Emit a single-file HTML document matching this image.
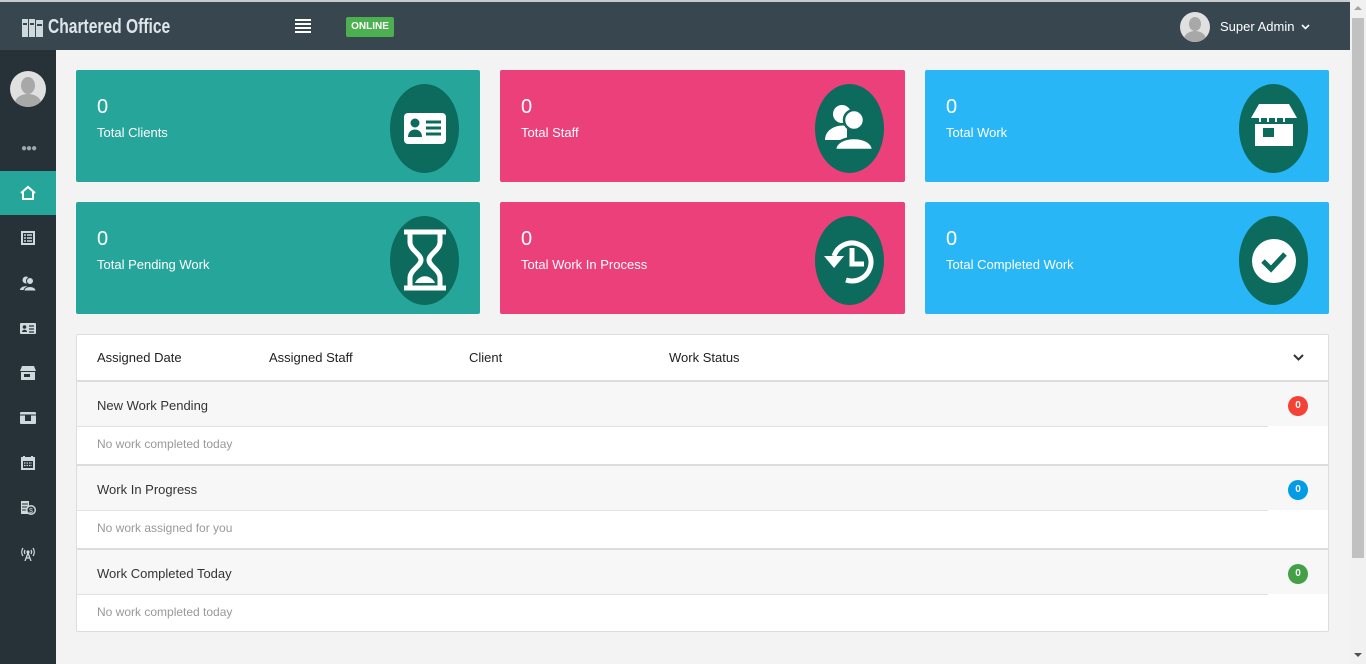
<!DOCTYPE html><html><head><style>
*{margin:0;padding:0;box-sizing:border-box}
body{width:1366px;height:664px;overflow:hidden;background:#f3f3f3;font-family:"Liberation Sans",sans-serif;position:relative}
.top{position:absolute;left:0;top:0;width:1350px;height:2px;background:#c8cbcc}
.hdr{position:absolute;left:0;top:2px;width:1350px;height:48px;background:#37464f;color:#fff}
.side{position:absolute;left:0;top:50px;width:56px;height:614px;background:#263238}
.sb{position:absolute;right:0;top:0;width:16px;height:664px;background:#f1f1f1}
.thumb{position:absolute;left:1352px;top:18px;width:12px;height:540px;background:#c1c1c1}
.card{position:absolute;height:112px;color:#fff;border-radius:2px}
.card .n{position:absolute;left:21px;top:26px;font-size:20px}
.card .l{position:absolute;left:21px;top:55px;font-size:13px}
.card .ic{position:absolute;right:21px;top:14px;width:69px;height:89px;border-radius:50%;background:#0c6b5c}
.card .ic svg{position:absolute;left:12px;top:22px}
.t{background:#26a69a}.p{background:#ec407a}.b{background:#29b6f6}
.tbl{position:absolute;left:76px;top:334px;width:1253px;height:298px;background:#fff;border:1px solid #ddd;border-radius:2px;font-size:13px;color:#333}
.row{position:absolute;left:0;width:1251px}
.sec{background:#f7f7f7;border-top:1px solid #ddd;height:46px}
.sec span{position:absolute;left:20px;top:16px}
.msg{height:37px;font-size:12px;color:#999}
.msg:before{content:"";position:absolute;left:0;top:0;width:1191px;border-top:1px solid #e3e3e3}
.msg span{position:absolute;left:20px;top:11px}
.bd{position:absolute;right:20px;top:14px;width:20px;height:20px;border-radius:50%;color:#fff;font-size:10px;font-weight:bold;text-align:center;line-height:20px}
.si{position:absolute;left:20px;width:16px;height:16px}
</style></head><body>
<div class="top"></div>
<div class="hdr">
<svg style="position:absolute;left:22px;top:17px" width="21" height="18" viewBox="0 0 21 18"><rect x="0" y="0" width="6" height="18" fill="#cfd8dc"/><rect x="7" y="0" width="6" height="18" fill="#cfd8dc"/><rect x="14" y="1" width="7" height="17" fill="#cfd8dc"/><rect x="1" y="4" width="4" height="2" fill="#37464f"/><rect x="8" y="4" width="4" height="2" fill="#37464f"/><rect x="15" y="5" width="5" height="2" fill="#37464f"/></svg>
<div style="position:absolute;left:48px;top:14px;font-size:20px;font-weight:bold;color:#dfe6ea;transform:scaleX(.78);transform-origin:left;white-space:nowrap">Chartered Office</div>
<div style="position:absolute;left:295px;top:17px;width:16px;height:14px;background:repeating-linear-gradient(#fff 0 2px,transparent 2px 4px)"></div>
<div style="position:absolute;left:346px;top:15px;width:48px;height:20px;background:#4caf50;border-radius:2px;font-size:10px;font-weight:bold;text-align:center;line-height:20px">ONLINE</div>
<div style="position:absolute;left:1180px;top:10px;width:30px;height:30px;border-radius:50%;background:#e0e0e0;overflow:hidden"><div style="position:absolute;left:9px;top:5px;width:12px;height:14px;border-radius:50%;background:#a8a8a8"></div><div style="position:absolute;left:4px;top:19px;width:22px;height:16px;border-radius:50% 50% 0 0;background:#a8a8a8"></div></div>
<div style="position:absolute;left:1220px;top:17px;font-size:13px">Super Admin</div>
<svg style="position:absolute;left:1301px;top:22px" width="9" height="6" viewBox="0 0 9 6"><path d="M1 1l3.5 3.5L8 1" stroke="#fff" stroke-width="1.6" fill="none"/></svg>
</div>
<div class="side">
<div style="position:absolute;left:10px;top:21px;width:36px;height:36px;border-radius:50%;background:#e0e0e0;overflow:hidden"><div style="position:absolute;left:11px;top:6px;width:14px;height:17px;border-radius:50%;background:#a8a8a8"></div><div style="position:absolute;left:5px;top:23px;width:26px;height:18px;border-radius:50% 50% 0 0;background:#a8a8a8"></div></div>
<div style="position:absolute;left:21px;top:93px;color:#9aa;font-size:10px;letter-spacing:-1px">●●●</div>
<div style="position:absolute;left:0;top:121px;width:56px;height:44px;background:#26a69a"><svg style="position:absolute;left:19px;top:14px" width="18" height="16" viewBox="0 0 18 16"><path d="M2 8 L9 2 L16 8 M4 7 V14 H14 V7" stroke="#fff" stroke-width="2" fill="none"/></svg></div>
<svg class="si" style="top:180px" viewBox="0 0 16 16"><rect x="1" y="1" width="14" height="14" fill="#cfd8dc"/><rect x="3" y="3" width="10" height="10" fill="#263238"/><path d="M4 5h2M7 5h5M4 8h2M7 8h5M4 11h2M7 11h5" stroke="#cfd8dc" stroke-width="1.5"/></svg>
<svg class="si" style="top:225px" viewBox="0 0 16 16"><circle cx="6" cy="5" r="3.5" fill="#cfd8dc"/><path d="M0 15c0-5 12-5 12 0z" fill="#cfd8dc"/><circle cx="10" cy="6" r="3.5" fill="#cfd8dc" stroke="#263238"/><path d="M4 16c0-6 12-6 12 0z" fill="#cfd8dc" stroke="#263238"/></svg>
<svg class="si" style="top:270px" viewBox="0 0 16 16"><rect x="0" y="3" width="16" height="11" rx="1" fill="#cfd8dc"/><circle cx="4.5" cy="7" r="1.8" fill="#263238"/><path d="M2 12c0-3 5-3 5 0z" fill="#263238"/><path d="M9 6h5M9 9h5M9 12h5" stroke="#263238" stroke-width="1.3"/></svg>
<svg class="si" style="top:315px" viewBox="0 0 16 16"><path d="M2 1h12l2 5H0z" fill="#cfd8dc"/><rect x="1" y="7" width="14" height="8" fill="#cfd8dc"/><rect x="4" y="9" width="6" height="3" fill="#263238"/></svg>
<svg class="si" style="top:360px" viewBox="0 0 16 16"><rect x="0" y="2" width="16" height="12" rx="1" fill="#cfd8dc"/><rect x="5" y="5" width="6" height="6" fill="#263238"/><path d="M0 5h16" stroke="#263238"/></svg>
<svg class="si" style="top:405px" viewBox="0 0 16 16"><rect x="1" y="2" width="14" height="13" fill="#cfd8dc"/><rect x="3" y="6" width="10" height="7" fill="#263238"/><path d="M4 1v3M12 1v3" stroke="#cfd8dc" stroke-width="2"/><path d="M4 8h8M4 10.5h8" stroke="#cfd8dc" stroke-width="1.2" stroke-dasharray="1.5 1"/></svg>
<svg class="si" style="top:450px" viewBox="0 0 16 16"><rect x="1" y="1" width="8" height="13" fill="#cfd8dc"/><path d="M2 4h6M2 7h6M2 10h6" stroke="#263238"/><circle cx="11" cy="10" r="5" fill="#cfd8dc"/><circle cx="11" cy="10" r="3.5" fill="#263238"/><text x="9" y="13" font-size="7" fill="#cfd8dc" font-family="Liberation Sans">$</text></svg>
<svg class="si" style="top:495px" viewBox="0 0 16 16"><path d="M3 3a7 7 0 0 0 0 8M13 3a7 7 0 0 1 0 8M5 5a4 4 0 0 0 0 4M11 5a4 4 0 0 1 0 4" stroke="#cfd8dc" stroke-width="1.3" fill="none"/><circle cx="8" cy="7" r="1.6" fill="#cfd8dc"/><path d="M8 8L5 16M8 8l3 8M6 13h4" stroke="#cfd8dc" stroke-width="1.3"/></svg>
</div>

<div class="card t" style="left:76px;top:70px;width:404px"><div class="n">0</div><div class="l">Total Clients</div><div class="ic"><svg width="46" height="44" viewBox="0 0 46 44" style="left:12px;top:23px"><rect x="2" y="6" width="42" height="31" rx="4" fill="#fff"/><circle cx="13" cy="16" r="4.5" fill="#0c6b5c"/><path d="M6 30c0-10 14-10 14 0z" fill="#0c6b5c"/><path d="M24 15h15M24 21h15M24 27h15" stroke="#0c6b5c" stroke-width="3"/></svg></div></div>
<div class="card p" style="left:500px;top:70px;width:405px"><div class="n">0</div><div class="l">Total Staff</div><div class="ic"><svg width="50" height="50" viewBox="0 0 50 50" style="left:8px;top:18px"><circle cx="19" cy="12" r="9" fill="#fff"/><path d="M2 38c0-12 14-16 22-14v14z" fill="#fff"/><circle cx="31" cy="18" r="10" stroke="#0c6b5c" stroke-width="2.5" fill="#fff"/><path d="M12 48c0-16 38-16 38 0z" fill="#fff" stroke="#0c6b5c" stroke-width="2.5"/></svg></div></div>
<div class="card b" style="left:925px;top:70px;width:404px"><div class="n">0</div><div class="l">Total Work</div><div class="ic"><svg width="46" height="46" viewBox="0 0 46 46" style="top:20px"><path d="M8 0h30l8 14H0z" fill="#fff"/><path d="M9 14v4M17 14v4M25 14v4M33 14v4" stroke="#fff" stroke-width="2"/><rect x="4" y="20" width="38" height="22" fill="#fff"/><rect x="12" y="24" width="11" height="9" fill="#0c6b5c"/></svg></div></div>
<div class="card t" style="left:76px;top:202px;width:404px"><div class="n">0</div><div class="l">Total Pending Work</div><div class="ic"><svg width="50" height="62" viewBox="0 0 50 62" style="left:10px;top:13px"><path d="M4 3h42M4 59h42" stroke="#fff" stroke-width="5"/><path d="M10 5v8c0 8 11 12 11 18s-11 10-11 18v8M40 5v8c0 8-11 12-11 18s11 10 11 18v8" stroke="#fff" stroke-width="5" fill="none"/><path d="M15 54c4-9 16-9 20 0z" fill="#fff"/></svg></div></div>
<div class="card p" style="left:500px;top:202px;width:405px"><div class="n">0</div><div class="l">Total Work In Process</div><div class="ic"><svg width="50" height="50" viewBox="0 0 50 50" style="left:9px;top:20px"><path d="M10 20A19 19 0 1 1 22 44" stroke="#fff" stroke-width="5" fill="none"/><path d="M0 20h20l-10 12z" fill="#fff"/><path d="M28 12v16h12" stroke="#fff" stroke-width="5" fill="none"/></svg></div></div>
<div class="card b" style="left:925px;top:202px;width:404px"><div class="n">0</div><div class="l">Total Completed Work</div><div class="ic"><svg width="46" height="46" viewBox="0 0 46 46" style="left:12px;top:22px"><circle cx="23" cy="23" r="22" fill="#fff"/><path d="M12 23l8 8 14-15" stroke="#0c6b5c" stroke-width="5" fill="none"/></svg></div></div>

<div class="tbl">
<div class="row" style="top:0;height:45px;color:#222"><span style="position:absolute;left:20px;top:15px">Assigned Date</span><span style="position:absolute;left:192px;top:15px">Assigned Staff</span><span style="position:absolute;left:392px;top:15px">Client</span><span style="position:absolute;left:592px;top:15px">Work Status</span><svg style="position:absolute;right:24px;top:19px" width="11" height="7" viewBox="0 0 11 7"><path d="M1 1l4.5 4.5L10 1" stroke="#333" stroke-width="2" fill="none"/></svg></div>
<div class="row sec" style="top:45px;border-top:2px solid #ddd"><span>New Work Pending</span><div class="bd" style="background:#f44336">0</div></div>
<div class="row msg" style="top:91px"><span>No work completed today</span></div>
<div class="row sec" style="top:129px;border-top:2px solid #ddd"><span>Work In Progress</span><div class="bd" style="background:#039be5">0</div></div>
<div class="row msg" style="top:175px"><span>No work assigned for you</span></div>
<div class="row sec" style="top:213px;border-top:2px solid #ddd"><span>Work Completed Today</span><div class="bd" style="background:#43a047">0</div></div>
<div class="row msg" style="top:259px"><span>No work completed today</span></div>
</div>
<div class="sb"></div><div class="thumb"></div>
<div style="position:absolute;left:1354px;top:6px;border:4px solid transparent;border-bottom:4px solid #a3a3a3;border-top:0"></div>
<div style="position:absolute;left:1354px;top:653px;border:4px solid transparent;border-top:4px solid #505050;border-bottom:0"></div>
</body></html>
